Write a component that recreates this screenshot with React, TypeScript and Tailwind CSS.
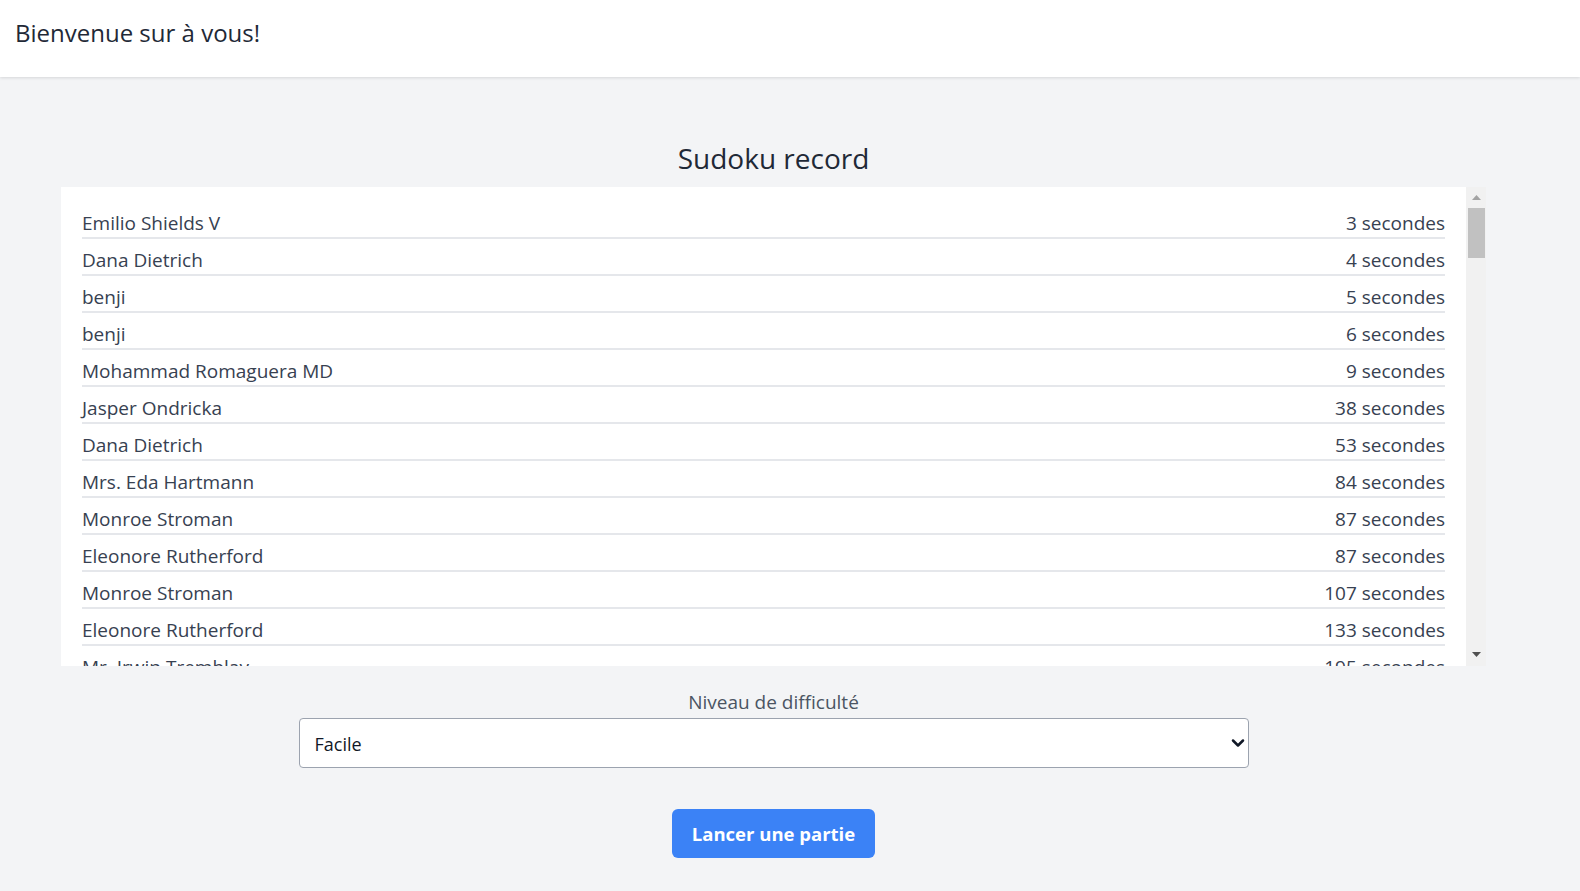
import { ChevronDown } from "lucide-react";

const FIRST_ROWS: [string, number][] = [
  ["Emilio Shields V", 3],
  ["Dana Dietrich", 4],
  ["benji", 5],
  ["benji", 6],
  ["Mohammad Romaguera MD", 9],
  ["Jasper Ondricka", 38],
  ["Dana Dietrich", 53],
  ["Mrs. Eda Hartmann", 84],
  ["Monroe Stroman", 87],
  ["Eleonore Rutherford", 87],
  ["Monroe Stroman", 107],
  ["Eleonore Rutherford", 133],
  ["Mr. Irwin Tremblay", 195],
];

const EXTRA_NAMES = [
  "Jasper Ondricka",
  "benji",
  "Mrs. Eda Hartmann",
  "Dana Dietrich",
  "Emilio Shields V",
  "Monroe Stroman",
  "Mohammad Romaguera MD",
  "Eleonore Rutherford",
  "Mr. Irwin Tremblay",
];

// the record list is long (the scrollbar thumb is small)
const ROWS: [string, number][] = [
  ...FIRST_ROWS,
  ...Array.from({ length: 100 }, (_, i): [string, number] => [
    EXTRA_NAMES[i % EXTRA_NAMES.length],
    210 + i * 17,
  ]),
];

function ScrollArrow({ up }: { up?: boolean }) {
  return (
    <svg width="9" height="5" viewBox="0 0 9 5" className="block">
      <polygon
        points={up ? "0,5 4.5,0 9,5" : "0,0 9,0 4.5,5"}
        fill={up ? "#a3a3a3" : "#505050"}
      />
    </svg>
  );
}

export default function App() {
  return (
    <div className="min-h-screen bg-[#f3f4f6] font-['Segoe_UI','Open_Sans','Liberation_Sans',sans-serif] text-[#1f2937]">
      <header className="h-[77px] bg-white shadow-[0_1px_3px_rgba(0,0,0,0.12)] px-[15px] pt-[17px]">
        <h1 className="text-[24px] leading-8">Bienvenue sur à vous!</h1>
      </header>

      <main className="ml-[61px] w-[1425px] pt-[63px] flex flex-col items-center">
        <h2 className="text-[28px] leading-9 mb-[11px]">Sudoku record</h2>

        <div className="w-full h-[479px] flex">
          <div className="flex-1 overflow-hidden bg-white pt-[15px] px-[21px]">
            {ROWS.map(([name, time], i) => (
              <div
                key={i}
                className="flex justify-between pt-[7px] text-[19px] leading-7 text-[#374151] border-b-2 border-[#e5e7eb]"
              >
                <span>{name}</span>
                <span>{time} secondes</span>
              </div>
            ))}
          </div>
          {/* scrollbar */}
          <div className="w-[20px] bg-[#f1f1f1] flex flex-col">
            <div className="h-[21px] pt-[8px] pl-[6px]">
              <ScrollArrow up />
            </div>
            <div className="h-[50px] ml-[2px] w-[17px] bg-[#c1c1c1]" />
            <div className="flex-1" />
            <div className="h-[21px] pt-[7px] pl-[6px]">
              <ScrollArrow />
            </div>
          </div>
        </div>

        <label className="mt-[22px] text-[19px] leading-7 text-[#4b5563]">Niveau de difficulté</label>
        <div className="relative w-2/3 mt-[2px]">
          <select className="appearance-none w-full h-[50px] bg-white border border-[#9ca3af] rounded-[4px] pl-[15px] pt-[2px] text-[18px] text-[#111827] outline-none">
            <option>Facile</option>
            <option>Moyen</option>
            <option>Difficile</option>
          </select>
          <ChevronDown
            size={20}
            strokeWidth={3}
            className="absolute right-[1px] top-[15px] text-[#111827] pointer-events-none"
          />
        </div>

        <button className="mt-[41px] h-[49px] w-[203px] rounded-md bg-[#3b82f6] text-white text-[18.5px] font-bold pt-[1px]">
          Lancer une partie
        </button>
      </main>
    </div>
  );
}
